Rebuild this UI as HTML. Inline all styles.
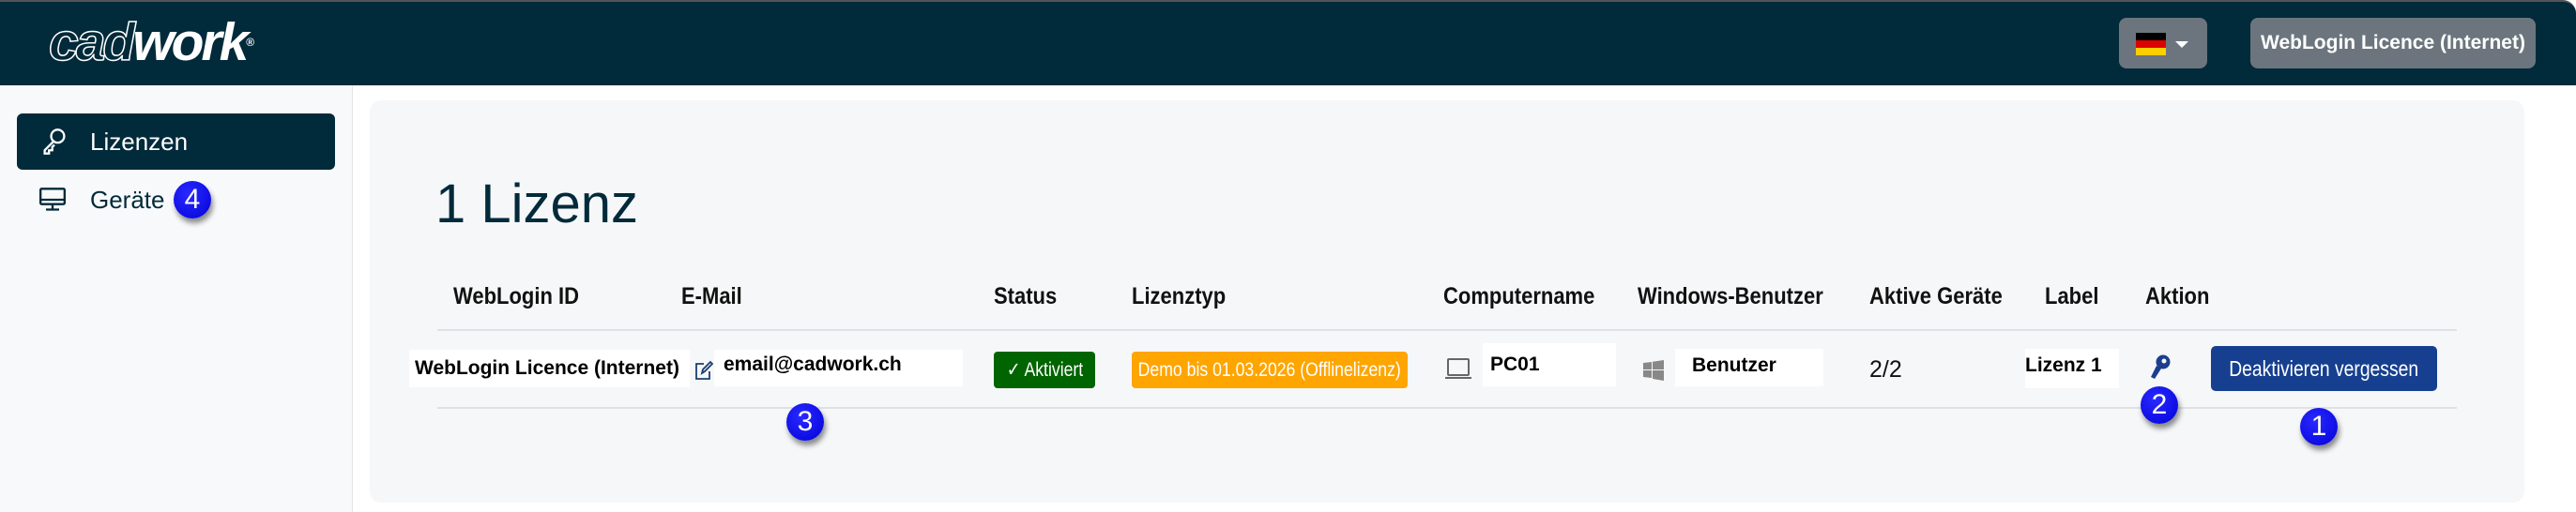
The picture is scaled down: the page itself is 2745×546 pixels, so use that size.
<!DOCTYPE html>
<html><head><meta charset="utf-8"><style>
*{margin:0;padding:0;box-sizing:border-box}
body{width:2745px;height:546px;overflow:hidden;background:#fff;font-family:"Liberation Sans",sans-serif;position:relative}
.a{position:absolute;white-space:nowrap}
.sx{display:inline-block;transform:scaleX(.84)}
.hdr{left:0;top:0;width:2745px;height:91px;background:#012a3a;border-top:2px solid #555;border-top-right-radius:14px}
.btn{background:#6c757d;border-radius:8px;color:#fff}
.side{left:0;top:91px;width:376px;height:455px;background:#f8f9fb;border-right:1px solid #e2e4e8}
.card{left:394px;top:107px;width:2296px;height:429px;background:#f6f7f8;border-radius:12px}
.th{top:302px;font-size:25px;color:#111;font-weight:bold;transform:scaleX(.88);transform-origin:left}
.wb{background:#fff;font-weight:bold;font-size:21px;color:#000;display:flex;align-items:center}
.badge{width:40px;height:40px;border-radius:50%;background:radial-gradient(circle at 40% 35%,#2a2aff,#0000d8);color:#fff;font-size:30px;text-align:center;line-height:40px;box-shadow:2px 5px 6px rgba(0,0,0,.45)}
</style></head><body>
<div class="a hdr"></div>
<div class="a" style="left:52px;top:17px;font-size:57px;font-style:italic;font-weight:bold;letter-spacing:-3px;line-height:57px"><span style="color:#012a3a;-webkit-text-stroke:1.5px #fff">cad</span><span style="color:#fff">work</span><span style="font-size:12px;color:#fff;vertical-align:top;font-style:normal">®</span></div>
<div class="a btn" style="left:2258px;top:19px;width:94px;height:54px">
 <div class="a" style="left:18px;top:16px;width:32px;height:8px;background:#000"></div>
 <div class="a" style="left:18px;top:24px;width:32px;height:8px;background:#d00"></div>
 <div class="a" style="left:18px;top:32px;width:32px;height:8px;background:#ffce00"></div>
 <div class="a" style="left:60px;top:25px;border-left:7px solid transparent;border-right:7px solid transparent;border-top:7px solid #fff"></div>
</div>
<div class="a btn" style="left:2398px;top:19px;width:304px;height:54px;font-weight:bold;font-size:21px;line-height:54px;text-align:center">WebLogin Licence (Internet)</div>
<div class="a side"></div>
<div class="a" style="left:18px;top:121px;width:339px;height:60px;background:#012a3a;border-radius:6px"></div>
<svg class="a" style="left:44px;top:136px" width="28" height="30" viewBox="0 0 24 26" fill="none" stroke="#fff" stroke-width="2"><circle cx="15" cy="8" r="6"/><path d="M11 13 L3 21 L3 24 L7 24 L7 21 L10 21 L10 18 L12 16"/></svg>
<div class="a" style="left:96px;top:136px;font-size:26px;color:#fff">Lizenzen</div>
<svg class="a" style="left:42px;top:200px" width="28" height="26" viewBox="0 0 24 22" fill="none" stroke="#012a3a" stroke-width="2"><rect x="1" y="1" width="22" height="14" rx="1"/><path d="M1 11H23M12 15V19M6 20H18"/></svg>
<div class="a" style="left:96px;top:198px;font-size:26px;color:#012a3a">Geräte</div>
<div class="a badge" style="left:185px;top:193px">4</div>
<div class="a card"></div>
<div class="a" style="left:464px;top:184px;font-size:58px;color:#012a3a">1 Lizenz</div>
<div class="a th" style="left:483px">WebLogin ID</div>
<div class="a th" style="left:726px">E-Mail</div>
<div class="a th" style="left:1059px">Status</div>
<div class="a th" style="left:1206px">Lizenztyp</div>
<div class="a th" style="left:1538px">Computername</div>
<div class="a th" style="left:1745px">Windows-Benutzer</div>
<div class="a th" style="left:1992px">Aktive Geräte</div>
<div class="a th" style="left:2179px">Label</div>
<div class="a th" style="left:2286px">Aktion</div>
<div class="a" style="left:466px;top:351px;width:2152px;height:2px;background:#dfe1e4"></div>
<div class="a" style="left:466px;top:434px;width:2152px;height:2px;background:#dfe1e4"></div>
<div class="a wb" style="left:436px;top:373px;width:299px;height:40px;padding-left:6px">WebLogin Licence (Internet)</div>
<svg class="a" style="left:740px;top:384px" width="20" height="22" viewBox="0 0 20 22" fill="none" stroke="#1b3f6f" stroke-width="1.8"><path d="M10 4H2V20H16V12"/><path d="M8 14L9 10L17 2L19 4L11 12Z"/></svg>
<div class="a wb" style="left:761px;top:373px;width:265px;height:39px;padding-left:10px;align-items:flex-start;padding-top:4px">email@cadwork.ch</div>
<div class="a" style="left:1059px;top:375px;width:108px;height:39px;background:#006400;border-radius:4px;color:#fff;font-size:21px;line-height:39px;text-align:center"><span class="sx" style="margin:0 -10px">✓ Aktiviert</span></div>
<div class="a" style="left:1206px;top:375px;width:294px;height:39px;background:#ffa500;border-radius:4px;color:#fff;font-size:21px;line-height:39px;text-align:center;overflow:hidden"><span class="sx" style="margin:0 -40px">Demo bis 01.03.2026 (Offlinelizenz)</span></div>
<svg class="a" style="left:1539px;top:381px" width="30" height="26" viewBox="0 0 30 26" fill="none" stroke="#666" stroke-width="2"><rect x="4" y="2" width="22" height="17" rx="1"/><path d="M1 22H29"/></svg>
<div class="a wb" style="left:1580px;top:366px;width:142px;height:46px;padding-left:8px">PC01</div>
<svg class="a" style="left:1751px;top:384px" width="22" height="22" viewBox="0 0 22 22" fill="#888"><path d="M0 3L9 2V10H0ZM10 1.8L22 0V10H10ZM0 11H9V19L0 18ZM10 11H22V22L10 20Z"/></svg>
<div class="a wb" style="left:1785px;top:372px;width:158px;height:40px;padding-left:18px;align-items:flex-start;padding-top:6px">Benutzer</div>
<div class="a" style="left:1992px;top:380px;font-size:25px;color:#111">2/2</div>
<div class="a wb" style="left:2158px;top:372px;width:100px;height:42px;align-items:flex-start;padding-top:6px">Lizenz 1</div>
<svg class="a" style="left:2290px;top:378px" width="24" height="28" viewBox="0 0 24 28" fill="#1b3f8f"><circle cx="15" cy="8" r="7.5"/><path d="M8 12L13 15L6 26L2 24Z"/><circle cx="16" cy="7" r="2.5" fill="#f6f7f8"/></svg>
<div class="a" style="left:2356px;top:369px;width:241px;height:48px;background:#163f8f;border-radius:5px;color:#fff;font-size:23px;line-height:48px;text-align:center;overflow:hidden"><span class="sx" style="margin:0 -30px">Deaktivieren vergessen</span></div>
<div class="a badge" style="left:838px;top:430px">3</div>
<div class="a badge" style="left:2281px;top:412px">2</div>
<div class="a badge" style="left:2451px;top:435px">1</div>
</body></html>
